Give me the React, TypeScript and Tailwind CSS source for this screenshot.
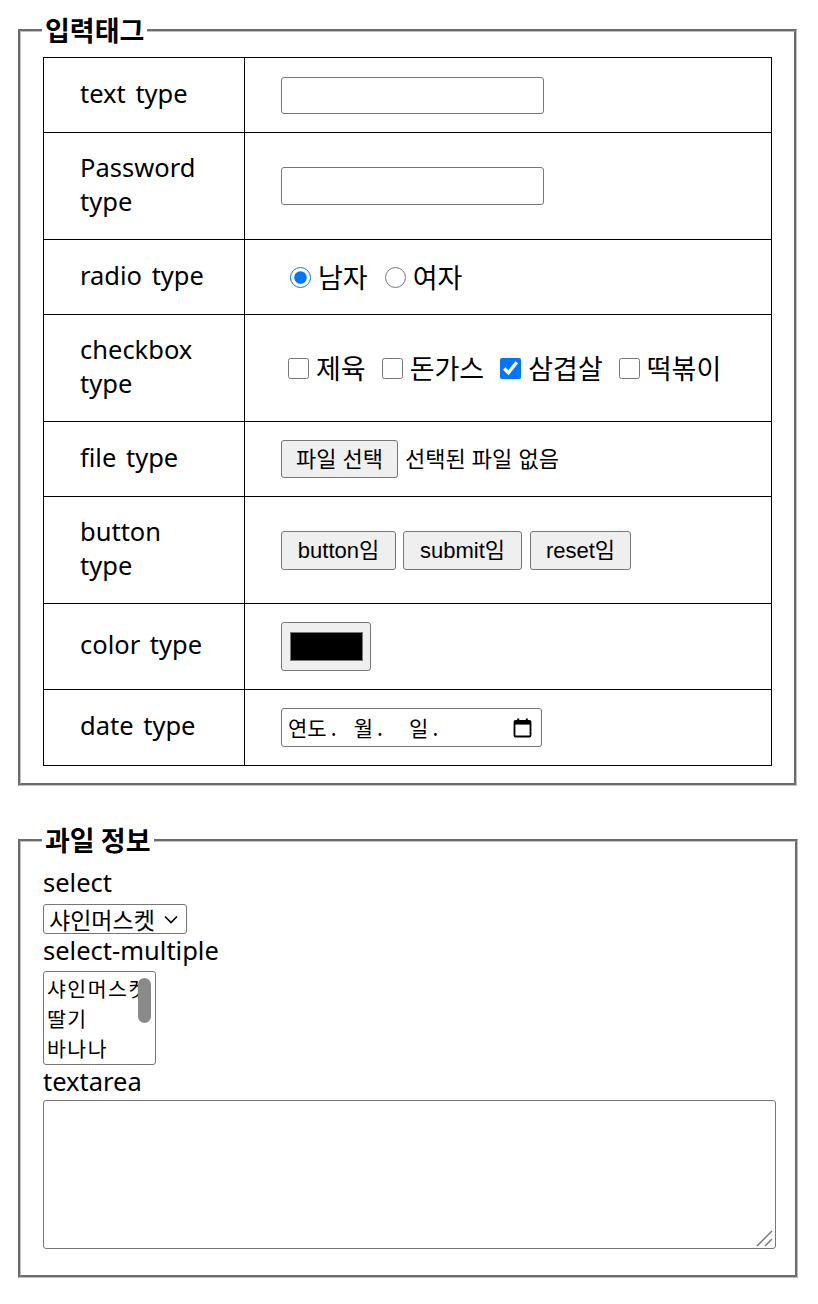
import React from "react";

function LabelCell({ children }: { children: React.ReactNode }) {
  return (
    <td className="w-[201px] border border-black pl-[36px] pr-[8px] pb-[5px] align-middle text-[25.5px] leading-[34px] [word-spacing:3px] whitespace-nowrap">
      {children}
    </td>
  );
}

function ValueCell({ children }: { children: React.ReactNode }) {
  return <td className="border border-black pl-[36px] align-middle">{children}</td>;
}

function CalendarIcon() {
  return (
    <svg width="19" height="20" viewBox="0 0 19 20" aria-hidden="true">
      <rect x="1.5" y="3" width="16" height="15.5" rx="1" fill="none" stroke="black" strokeWidth="1.8" />
      <rect x="1.5" y="3" width="16" height="3.6" fill="black" />
      <rect x="4.2" y="0.5" width="2" height="3.5" fill="black" />
      <rect x="12.8" y="0.5" width="2" height="3.5" fill="black" />
    </svg>
  );
}

export default function App() {
  return (
    <div className="min-h-[1304px] bg-white pl-[18px] pt-[14px] text-black font-['Noto_Sans','Noto_Sans_CJK_KR',sans-serif]">
      <fieldset className="m-0 w-[777px] border-[3px] border-[#c0c0c0] [border-style:groove] px-[22px] pt-[11px] pb-[17px]">
        <legend className="ml-[-1px] px-[3px] text-[27px] font-bold leading-[32px] font-['Noto_Sans_CJK_KR',sans-serif]">
          입력태그
        </legend>
        <table className="w-[729px] table-fixed border-collapse border border-black">
          <tbody>
            <tr className="h-[75px]">
              <LabelCell>text type</LabelCell>
              <ValueCell>
                <input type="text" className="block h-[37px] w-[263px] rounded-[3px] border border-[#767676] bg-white" />
              </ValueCell>
            </tr>
            <tr className="h-[107px]">
              <LabelCell>
                Password
                <br />
                type
              </LabelCell>
              <ValueCell>
                <input type="password" className="block h-[38px] w-[263px] rounded-[3px] border border-[#767676] bg-white" />
              </ValueCell>
            </tr>
            <tr className="h-[75px]">
              <LabelCell>radio type</LabelCell>
              <ValueCell>
                <div className="flex items-center text-[27px] leading-[34px] font-['Noto_Sans_CJK_KR',sans-serif]">
                  <input type="radio" name="gender" defaultChecked className="m-0 ml-[9px] mr-[7px] h-[21px] w-[21px]" />
                  <span>남자</span>
                  <input type="radio" name="gender" className="m-0 ml-[17px] mr-[7px] h-[21px] w-[21px]" />
                  <span>여자</span>
                </div>
              </ValueCell>
            </tr>
            <tr className="h-[107px]">
              <LabelCell>
                checkbox
                <br />
                type
              </LabelCell>
              <ValueCell>
                <div className="flex items-center text-[27px] leading-[34px] font-['Noto_Sans_CJK_KR',sans-serif]">
                  <input type="checkbox" className="m-0 ml-[7px] mr-[7px] h-[21px] w-[21px]" />
                  <span>제육</span>
                  <input type="checkbox" className="m-0 ml-[16px] mr-[7px] h-[21px] w-[21px]" />
                  <span>돈가스</span>
                  <input type="checkbox" defaultChecked className="m-0 ml-[16px] mr-[7px] h-[21px] w-[21px]" />
                  <span>삼겹살</span>
                  <input type="checkbox" className="m-0 ml-[16px] mr-[7px] h-[21px] w-[21px]" />
                  <span>떡볶이</span>
                </div>
              </ValueCell>
            </tr>
            <tr className="h-[75px]">
              <LabelCell>file type</LabelCell>
              <ValueCell>
                <div className="flex items-center text-[22px] font-['Liberation_Sans','Noto_Sans_CJK_KR',sans-serif]">
                  <div className="flex h-[38px] w-[117px] items-center justify-center rounded-[3px] border border-[#767676] bg-[#efefef]">
                    파일 선택
                  </div>
                  <span className="ml-[7px]">선택된 파일 없음</span>
                </div>
              </ValueCell>
            </tr>
            <tr className="h-[107px]">
              <LabelCell>
                button
                <br />
                type
              </LabelCell>
              <ValueCell>
                <div className="flex items-center text-[22px] font-['Liberation_Sans','Noto_Sans_CJK_KR',sans-serif]">
                  <button type="button" className="flex h-[39px] w-[115px] items-center justify-center rounded-[3px] border border-[#767676] bg-[#efefef]">
                    button임
                  </button>
                  <button type="button" className="ml-[7px] flex h-[39px] w-[119px] items-center justify-center rounded-[3px] border border-[#767676] bg-[#efefef]">
                    submit임
                  </button>
                  <button type="button" className="ml-[8px] flex h-[39px] w-[101px] items-center justify-center rounded-[3px] border border-[#767676] bg-[#efefef]">
                    reset임
                  </button>
                </div>
              </ValueCell>
            </tr>
            <tr className="h-[86px]">
              <LabelCell>color type</LabelCell>
              <ValueCell>
                <div className="flex h-[49px] w-[90px] items-center justify-center rounded-[3px] border border-[#767676] bg-[#efefef]">
                  <div className="h-[29px] w-[73px] border border-[#777777] bg-black" />
                </div>
              </ValueCell>
            </tr>
            <tr className="h-[76px]">
              <LabelCell>date type</LabelCell>
              <ValueCell>
                <div className="flex h-[39px] w-[261px] items-center rounded-[3px] border border-[#767676] bg-white pl-[6px] pr-[9px] text-[21px] font-['Noto_Sans_CJK_KR',sans-serif]">
                  <span>연도</span>
                  <span className="w-[14px] text-center">.</span>
                  <span className="ml-[13px]">월</span>
                  <span className="w-[14px] text-center">.</span>
                  <span className="ml-[22px]">일</span>
                  <span className="w-[14px] text-center">.</span>
                  <span className="ml-auto flex items-center">
                    <CalendarIcon />
                  </span>
                </div>
              </ValueCell>
            </tr>
          </tbody>
        </table>
      </fieldset>

      <fieldset className="m-0 mt-[38px] w-[780px] border-[3px] border-[#c0c0c0] [border-style:groove] pl-[22px] pr-[19px] pt-[10px] pb-[26px]">
        <legend className="ml-[-1px] px-[3px] text-[27px] font-bold leading-[32px] font-['Noto_Sans_CJK_KR',sans-serif]">
          과일 정보
        </legend>
        <div className="flex flex-col items-start">
          <div className="text-[25.5px] leading-[32px]">select</div>
          <div className="mt-[6px] flex h-[30px] w-[144px] items-center rounded-[3px] border border-[#767676] bg-white pl-[5px] text-[23px] font-['Noto_Sans_CJK_KR',sans-serif]">
            <span>샤인머스켓</span>
            <svg className="ml-[9px]" width="14" height="9" viewBox="0 0 14 9" aria-hidden="true">
              <polyline points="1,1.5 7,7.5 13,1.5" fill="none" stroke="black" strokeWidth="1.6" />
            </svg>
          </div>
          <div className="text-[25.5px] leading-[32px]">select-multiple</div>
          <div className="relative mt-[5px] h-[94px] w-[113px] overflow-hidden rounded-[3px] border border-[#767676] bg-white pl-[3px] pt-[1px] text-[20.5px] leading-[30px] tracking-[1.5px] font-['Noto_Sans_CJK_KR',sans-serif] whitespace-nowrap">
            <div className="h-[30px]">샤인머스켓</div>
            <div className="h-[30px]">딸기</div>
            <div className="h-[30px]">바나나</div>
            <div className="absolute right-[4px] top-[6px] h-[45px] w-[13px] rounded-full bg-[#8a8a8a]" />
          </div>
          <div className="text-[25.5px] leading-[32px]">textarea</div>
          <div className="relative mt-[3px] h-[149px] w-[733px] rounded-[3px] border border-[#767676] bg-white">
            <svg className="absolute bottom-0 right-0" width="20" height="20" viewBox="0 0 20 20" aria-hidden="true">
              <line x1="2" y1="18" x2="17" y2="3" stroke="#777" strokeWidth="1.5" />
              <line x1="10" y1="18" x2="17" y2="11" stroke="#777" strokeWidth="1.5" />
            </svg>
          </div>
        </div>
      </fieldset>
    </div>
  );
}
